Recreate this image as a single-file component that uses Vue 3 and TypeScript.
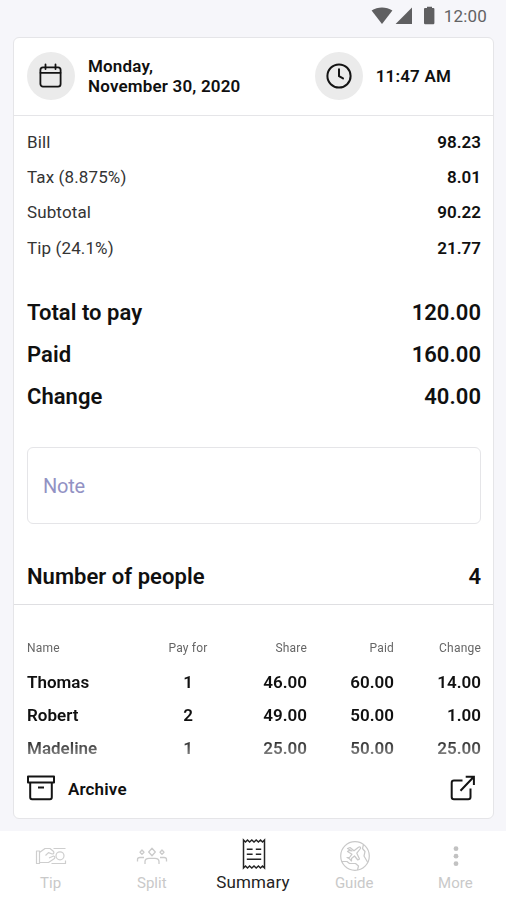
<script setup lang="ts">
interface Line {
  label: string
  value: string
}

interface Person {
  name: string
  payFor: number
  share: string
  paid: string
  change: string
}

const lines: Line[] = [
  { label: 'Bill', value: '98.23' },
  { label: 'Tax (8.875%)', value: '8.01' },
  { label: 'Subtotal', value: '90.22' },
  { label: 'Tip (24.1%)', value: '21.77' },
]

const totals: Line[] = [
  { label: 'Total to pay', value: '120.00' },
  { label: 'Paid', value: '160.00' },
  { label: 'Change', value: '40.00' },
]

const people: Person[] = [
  { name: 'Thomas', payFor: 1, share: '46.00', paid: '60.00', change: '14.00' },
  { name: 'Robert', payFor: 2, share: '49.00', paid: '50.00', change: '1.00' },
  { name: 'Madeline', payFor: 1, share: '25.00', paid: '50.00', change: '25.00' },
]
</script>

<template>
  <div class="screen">
    <header class="status">
      <svg class="status-icons" width="66" height="20" viewBox="0 0 66 20" fill="#5f5f61">
        <path d="M0.6 4.6C6.6 0.4 15.4 0.4 21.4 4.6L11 18Z" />
        <path d="M41 1.6V18H24.6Z" />
        <path d="M54 2h2V.8h5V2h1.4q1 0 1 1v14q0 1.200-1.200 1.200h-8q-1.200 0-1.200-1.200V3q0-1 1-1Z" />
      </svg>
      <span class="status-time">12:00</span>
    </header>

    <main class="card">
      <section class="when">
        <div class="date">
          <span class="disc">
            <svg width="26" height="26" viewBox="0 0 26 26" fill="none" stroke="#141414" stroke-width="1.8" stroke-linecap="round" stroke-linejoin="round">
              <rect x="2.400" y="4.300" width="20.200" height="19.300" rx="2.600" />
              <path d="M2.500 9.800H22.500M7.500 1.500V6M17.500 1.500V6" />
            </svg>
          </span>
          <p>Monday,<br />November 30, 2020</p>
        </div>
        <div class="time">
          <span class="disc">
            <svg width="28" height="28" viewBox="0 0 28 28" fill="none" stroke="#141414" stroke-width="2" stroke-linecap="round" stroke-linejoin="round">
              <circle cx="14" cy="14" r="11.600" />
              <path d="M14 7.200V14.200L18 16.400" />
            </svg>
          </span>
          <p>11:47 AM</p>
        </div>
      </section>

      <section class="lines">
        <div v-for="line in lines" :key="line.label" class="line">
          <span>{{ line.label }}</span>
          <span class="amount">{{ line.value }}</span>
        </div>
      </section>

      <section class="totals">
        <div v-for="line in totals" :key="line.label" class="total">
          <span>{{ line.label }}</span>
          <span>{{ line.value }}</span>
        </div>
      </section>

      <div class="note">Note</div>

      <div class="total count">
        <span>Number of people</span>
        <span>4</span>
      </div>

      <section class="people">
        <div class="person head">
          <span>Name</span><span>Pay for</span><span>Share</span><span>Paid</span><span>Change</span>
        </div>
        <div v-for="p in people" :key="p.name" class="person">
          <span>{{ p.name }}</span>
          <span>{{ p.payFor }}</span>
          <span>{{ p.share }}</span>
          <span>{{ p.paid }}</span>
          <span>{{ p.change }}</span>
        </div>
      </section>

      <footer class="actions">
        <div class="archive">
          <svg width="28" height="26" viewBox="0 0 28 26" fill="none" stroke="#141414" stroke-width="2" stroke-linejoin="round">
            <rect x="1" y="1.500" width="26" height="6" />
            <path d="M3.200 7.500V22.300Q3.200 24.200 5.100 24.200H22.900Q24.800 24.200 24.800 22.300V7.500M11 12.600H17" />
          </svg>
          <span>Archive</span>
        </div>
        <svg width="26" height="26" viewBox="0 0 26 26" fill="none" stroke="#141414" stroke-width="2">
          <path d="M12.500 5.500H4Q1.700 5.500 1.700 7.800V22Q1.700 24.300 4 24.300H18.200Q20.500 24.300 20.500 22V13.500" />
          <path d="M10.500 15.800L23.600 2M15.700 1.700H23.900V10" />
        </svg>
      </footer>
    </main>

    <nav class="tabs">
      <div class="tab">
        <svg width="32" height="32" viewBox="0 0 32 32" fill="none" stroke="#cecece" stroke-width="1.200" stroke-linejoin="round">
          <path d="M1.500 11H4.500V23.500H1.500ZM4.500 12.600L10 8.500H15L18.600 11.500Q19.500 14 17.200 14L13.500 12.600L10.500 15.500M4.500 22.500H13.500L19.500 18.500Q20.500 16.500 18.600 16L14 18M18.500 8.500H30.500M16.500 23.500H30.500V20.500" />
          <circle cx="25" cy="15.800" r="4" />
        </svg>
        <span>Tip</span>
      </div>
      <div class="tab">
        <svg width="32" height="32" viewBox="0 0 32 32" fill="none" stroke="#cbcbcb" stroke-width="1.300">
          <path d="M16 8.300L19.300 12L16 15.700L12.700 12Z" stroke-linejoin="round" />
          <path d="M6 10L8 12.200L6 14.400L4 12.200ZM26 10L28 12.200L26 14.400L24 12.200Z" stroke-linejoin="round" />
          <path d="M9 24V21.500Q9 18.300 13 18.300H19Q23 18.300 23 21.500V24M1.500 21.500V19.500Q1.500 17.500 4 17.500H8M30.500 21.500V19.500Q30.500 17.500 28 17.500H24" />
        </svg>
        <span>Split</span>
      </div>
      <div class="tab active">
        <svg width="32" height="32" viewBox="0 0 32 32" fill="none" stroke="#242424" stroke-width="1.500">
          <path d="M5.500 2L7.500 4L9.500 2L11.600 4L13.800 2L16 4L18.200 2L20.400 4L22.500 2L24.500 4L26.500 2V30L24.500 28L22.500 30L20.400 28L18.200 30L16 28L13.800 30L11.600 28L9.500 30L7.500 28L5.500 30Z" />
          <path d="M8.800 11.200H14.600M17.800 11.200H23.200M8.800 16.200H14.600M17.800 16.200H23.200M8.800 21.300H23.200" />
        </svg>
        <span>Summary</span>
      </div>
      <div class="tab">
        <svg width="32" height="32" viewBox="0 0 32 32" fill="none" stroke="#c9c9c9" stroke-width="1.200" stroke-linejoin="round">
          <circle cx="16" cy="16" r="14.300" />
          <path d="M8.500 8.500L11 7.500L15 10.800L19.500 7.200Q21.800 6.200 21.500 8.500L17.800 13.200L20.500 19L18.800 20L15.500 16L12.500 18.500V21L10.500 18.800L8 17.500H10.500L13 14.200L8.500 11.500L10 10.500L13 11Z" />
          <path d="M24.500 4.500L23.500 8.500L26 11.500L25 16L28.500 22M2.500 21.500H8L10.500 23.500H16.500L19.500 26L18.500 30" />
        </svg>
        <span>Guide</span>
      </div>
      <div class="tab">
        <svg width="32" height="32" viewBox="0 0 32 32" fill="#c2c2c2">
          <circle cx="16" cy="8.700" r="2.400" />
          <circle cx="16" cy="16.200" r="2.400" />
          <circle cx="16" cy="23.700" r="2.400" />
        </svg>
        <span>More</span>
      </div>
    </nav>
  </div>
</template>

<style>
body {
  margin: 0;
  background: #f6f6fa;
}
</style>

<style scoped>
.screen {
  box-sizing: border-box;
  width: 506px;
  height: 900px;
  display: flex;
  flex-direction: column;
  overflow: hidden;
  background: #f6f6fa;
  color: #101010;
  font-family: Roboto, 'Liberation Sans', sans-serif;
  font-size: 17px;
  line-height: 20px;
}

svg {
  display: block;
  flex: none;
}

p {
  margin: 0;
}

.status {
  flex: none;
  height: 37px;
  box-sizing: border-box;
  padding: 6px 19px 0 0;
  display: flex;
  justify-content: flex-end;
  gap: 7px;
}

.status-time {
  color: #626264;
  letter-spacing: 0.2px;
}

.card {
  flex: none;
  box-sizing: border-box;
  height: 782px;
  margin: 0 12px 0 13px;
  display: flex;
  flex-direction: column;
  background: #fff;
  border: 1px solid #e5e5e8;
  border-radius: 6px;
}

.when {
  flex: none;
  box-sizing: border-box;
  height: 78px;
  padding: 0 42px 1px 13px;
  display: flex;
  align-items: center;
  justify-content: space-between;
  border-bottom: 1px solid #e5e5e8;
  font-weight: 600;
}

.date,
.time {
  display: flex;
  align-items: center;
  gap: 13px;
  letter-spacing: 0.18px;
}

.disc {
  width: 48px;
  height: 48px;
  display: flex;
  align-items: center;
  justify-content: center;
  border-radius: 50%;
  background: #ebebeb;
}

.lines {
  flex: none;
  padding: 8px 12px 0 13px;
}

.line {
  height: 35.4px;
  display: flex;
  align-items: center;
  justify-content: space-between;
  color: #343434;
  letter-spacing: 0.12px;
}

.amount {
  color: #101010;
  font-weight: 600;
  letter-spacing: 0;
}

.totals {
  flex: none;
  padding: 26px 12px 29px 13px;
}

.total {
  height: 42.2px;
  display: flex;
  align-items: center;
  justify-content: space-between;
  font-size: 22px;
  line-height: 28px;
  font-weight: 600;
  letter-spacing: 0.04px;
}

.note {
  flex: none;
  box-sizing: border-box;
  height: 77px;
  margin: 0 12px 0 13px;
  padding: 1px 0 0 15px;
  display: flex;
  align-items: center;
  border: 1px solid #e5e5e8;
  border-radius: 6px;
  color: #9292c4;
  font-size: 20px;
  letter-spacing: -0.2px;
}

.count {
  flex: none;
  box-sizing: border-box;
  height: 81px;
  padding: 26px 12px 0 13px;
  border-bottom: 1px solid #dfdfe2;
}

.people {
  flex: none;
  box-sizing: border-box;
  height: 154px;
  padding: 27px 12px 0 13px;
  overflow: hidden;
  mask-image: linear-gradient(#000 132px, rgba(0, 0, 0, 0.55) 149px, transparent 153px);
}

.person {
  height: 33.3px;
  display: grid;
  grid-template-columns: 120px 82px 78px 87px 87px;
  align-items: center;
  font-weight: 600;
  text-align: right;
}

.person span:first-child {
  text-align: left;
}

.person span:nth-child(2) {
  text-align: center;
}

.head {
  height: 31px;
  margin-bottom: 2px;
  color: #666;
  font-size: 12px;
  font-weight: 400;
  letter-spacing: 0.2px;
}

.actions {
  flex: 1;
  padding: 0 17px 2px 13px;
  display: flex;
  align-items: center;
  justify-content: space-between;
}

.archive {
  display: flex;
  align-items: center;
  gap: 13px;
  font-weight: 600;
  letter-spacing: 0.15px;
}

.archive span {
  padding-top: 3px;
}

.tabs {
  flex: none;
  box-sizing: border-box;
  height: 69px;
  margin-top: 12px;
  padding-top: 9px;
  display: grid;
  grid-template-columns: repeat(5, 1fr);
  background: #fff;
}

.tab {
  display: flex;
  flex-direction: column;
  align-items: center;
  gap: 1px;
  color: #c9c9c9;
  font-size: 15px;
}

.tab svg {
  margin-left: 1px;
}

.active {
  color: #242424;
  font-size: 17px;
  letter-spacing: 0.15px;
}

.tab.active svg {
  margin: -2px 0 1px 2px;
}
</style>
